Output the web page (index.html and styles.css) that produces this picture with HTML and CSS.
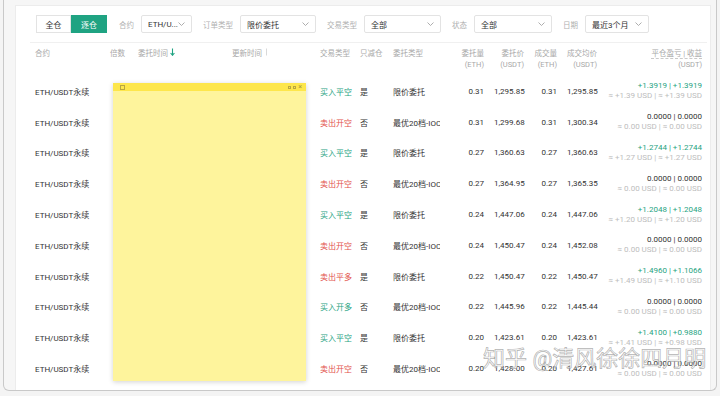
FILE: index.html
```html
<!DOCTYPE html>
<html lang="zh-CN">
<head>
    <meta charset="UTF-8">
    <meta name="viewport" content="width=device-width, initial-scale=1.0">
    <title>历史委托</title>
    <link rel="stylesheet" href="styles.css">
</head>
<body>
    <div class="frame">
        <div class="panel">
            <div class="filters">
                <div class="mode-group">
                    <button class="mode-btn">全仓</button>
                    <button class="mode-btn active">逐仓</button>
                </div>

                <span class="filter-label">合约</span>
                <div class="select w-contract">
                    <span>ETH/U...</span>
                    <svg class="chevron" width="7" height="4" viewBox="0 0 7 4"><polyline points="0.5,0.5 3.5,3.5 6.5,0.5"/></svg>
                </div>

                <span class="filter-label">订单类型</span>
                <div class="select w-type">
                    <span>限价委托</span>
                    <svg class="chevron" width="7" height="4" viewBox="0 0 7 4"><polyline points="0.5,0.5 3.5,3.5 6.5,0.5"/></svg>
                </div>

                <span class="filter-label">交易类型</span>
                <div class="select w-trade">
                    <span>全部</span>
                    <svg class="chevron" width="7" height="4" viewBox="0 0 7 4"><polyline points="0.5,0.5 3.5,3.5 6.5,0.5"/></svg>
                </div>

                <span class="filter-label">状态</span>
                <div class="select w-status">
                    <span>全部</span>
                    <svg class="chevron" width="7" height="4" viewBox="0 0 7 4"><polyline points="0.5,0.5 3.5,3.5 6.5,0.5"/></svg>
                </div>

                <span class="filter-label">日期</span>
                <div class="select w-date">
                    <span>最近3个月</span>
                    <svg class="chevron" width="7" height="4" viewBox="0 0 7 4"><polyline points="0.5,0.5 3.5,3.5 6.5,0.5"/></svg>
                </div>
            </div>

            <table class="orders">
                <colgroup>
                    <col style="width:75px">
                    <col style="width:28px">
                    <col style="width:94px">
                    <col style="width:88px">
                    <col style="width:40px">
                    <col style="width:33px">
                    <col style="width:52px">
                    <col style="width:49px">
                    <col style="width:40px">
                    <col style="width:33px">
                    <col style="width:40px">
                    <col style="width:105px">
                </colgroup>
                <thead>
                    <tr>
                        <th>合约</th>
                        <th>倍数</th>
                        <th>委托时间 <svg class="sort-down" width="5" height="8" viewBox="0 0 5 8"><path d="M2.5 0.5V7M0.6 5L2.5 7.3 4.4 5"/></svg></th>
                        <th>更新时间 <svg class="sort-both" width="5" height="8" viewBox="0 0 5 8"><path d="M2.5 0.5V7.5"/></svg></th>
                        <th>交易类型</th>
                        <th>只减仓</th>
                        <th>委托类型</th>
                        <th class="num">委托量<br>(ETH)</th>
                        <th class="num">委托价<br>(USDT)</th>
                        <th class="num">成交量<br>(ETH)</th>
                        <th class="num">成交均价<br>(USDT)</th>
                        <th class="num"><span class="dashed">平仓盈亏 | 收益</span><br>(USDT)</th>
                    </tr>
                </thead>
                <tbody id="rows"></tbody>
            </table>
        </div>
    </div>

    <div class="sticky-note">
        <div class="note-bar">
            <span class="note-square"></span>
            <span class="note-actions">
                <span class="note-dot"></span>
                <span class="note-dot"></span>
                <span class="note-close">×</span>
            </span>
        </div>
    </div>

    <div class="watermark">知乎 @清风徐徐四月明</div>

    <script>
        const orders = [
            ['buy', '买入平空', '是', '限价委托', '0.31', '1,295.85', '0.31', '1,295.85', '+1.3919', '+1.3919', '+1.39', '+1.39'],
            ['sell', '卖出开空', '否', '最优20档-IOC', '0.31', '1,299.68', '0.31', '1,300.34', '0.0000', '0.0000', '0.00', '0.00'],
            ['buy', '买入平空', '是', '限价委托', '0.27', '1,360.63', '0.27', '1,360.63', '+1.2744', '+1.2744', '+1.27', '+1.27'],
            ['sell', '卖出开空', '否', '最优20档-IOC', '0.27', '1,364.95', '0.27', '1,365.35', '0.0000', '0.0000', '0.00', '0.00'],
            ['buy', '买入平空', '是', '限价委托', '0.24', '1,447.06', '0.24', '1,447.06', '+1.2048', '+1.2048', '+1.20', '+1.20'],
            ['sell', '卖出开空', '否', '最优20档-IOC', '0.24', '1,450.47', '0.24', '1,452.08', '0.0000', '0.0000', '0.00', '0.00'],
            ['sell', '卖出平多', '是', '限价委托', '0.22', '1,450.47', '0.22', '1,450.47', '+1.4960', '+1.1066', '+1.49', '+1.10'],
            ['buy', '买入开多', '否', '最优20档-IOC', '0.22', '1,445.96', '0.22', '1,445.44', '0.0000', '0.0000', '0.00', '0.00'],
            ['buy', '买入平空', '是', '限价委托', '0.20', '1,423.61', '0.20', '1,423.61', '+1.4100', '+0.9880', '+1.41', '+0.98'],
            ['sell', '卖出开空', '否', '最优20档-IOC', '0.20', '1,428.00', '0.20', '1,427.61', '0.0000', '0.0000', '0.00', '0.00']
        ];

        const tbody = document.getElementById('rows');

        orders.forEach(o => {
            const tr = document.createElement('tr');
            const pnlClass = o[8].startsWith('+') ? 'pnl up' : 'pnl';
            tr.innerHTML = `
                <td>ETH/USDT永续</td>
                <td></td>
                <td></td>
                <td></td>
                <td class="${o[0]}">${o[1]}</td>
                <td>${o[2]}</td>
                <td>${o[3]}</td>
                <td class="num">${o[4]}</td>
                <td class="num">${o[5]}</td>
                <td class="num">${o[6]}</td>
                <td class="num">${o[7]}</td>
                <td class="num">
                    <div class="${pnlClass}">${o[8]} | ${o[9]}</div>
                    <div class="pnl-usd">≈ ${o[10]} USD | ≈ ${o[11]} USD</div>
                </td>`;
            tbody.appendChild(tr);
        });
    </script>
</body>
</html>
```

FILE: styles.css
```css
* {
    box-sizing: border-box;
    margin: 0;
    padding: 0;
    font-family: Roboto, 'Noto Sans CJK SC', sans-serif;
}

body {
    background-color: #f4f4f4;
    width: 720px;
    height: 396px;
    overflow: hidden;
}

.frame {
    margin: 0 3px 0 3px;
    height: 391px;
    background: #f6f6f6;
    border: 1px solid #c9c9c9;
    border-top: none;
    border-radius: 0 0 6px 6px;
    padding: 5px 5px 0 11px;
}

.panel {
    height: 100%;
    background: white;
    border-left: 1px solid #ececec;
    border-right: 1px solid #ececec;
    border-top: 1px solid #ececec;
    padding: 0 3px 0 14px;
}

/* filter bar */
.filters {
    display: flex;
    align-items: center;
    padding: 9px 0 9px 6px;
    border-bottom: 1px solid #f0f0f0;
}

.mode-group {
    display: flex;
    height: 18px;
    margin-right: 12px;
}

.mode-btn {
    width: 35px;
    height: 18px;
    border: 1px solid #e3e3e3;
    background: white;
    color: #333;
    font-size: 8px;
}

.mode-btn.active {
    width: 36px;
    background-color: #1fa382;
    border-color: #1fa382;
    color: white;
}

.filter-label {
    color: #b0b0b0;
    font-size: 7.5px;
    margin-right: 7px;
}

.select {
    height: 18px;
    display: flex;
    align-items: center;
    justify-content: space-between;
    padding: 0 6px 0 6px;
    border: 1px solid #e3e3e3;
    border-radius: 2px;
    font-size: 8px;
    color: #333;
    margin-right: 11px;
}

.chevron polyline {
    fill: none;
    stroke: #999;
    stroke-width: 0.8;
}

.w-contract { width: 51px; }
.w-type { width: 76px; }
.w-trade { width: 77px; }
.w-status { width: 78px; }
.w-date { width: 64px; margin-right: 0; }

/* table */
.orders {
    width: 677px;
    table-layout: fixed;
    border-collapse: collapse;
    border-spacing: 0;
}

.orders thead tr {
    height: 33px;
}

.orders th {
    vertical-align: top;
    padding: 5px 5px 0;
    text-align: left;
    font-weight: normal;
    font-size: 7.5px;
    line-height: 11px;
    color: #a8a8a8;
    white-space: nowrap;
}

.orders th.num,
.orders td.num {
    text-align: right;
}

.sort-down path {
    fill: none;
    stroke: #1fa382;
    stroke-width: 1.1;
}

.sort-both path {
    fill: none;
    stroke: #c8c8c8;
    stroke-width: 0.7;
}

.dashed {
    border-bottom: 1px dashed #c9c9c9;
}

.orders tbody tr {
    height: 30.8px;
}

.orders td {
    padding: 0 5px;
    font-size: 8px;
    color: #333;
    white-space: nowrap;
    overflow: hidden;
}

.orders td.buy {
    color: #1fa382;
}

.orders td.sell {
    color: #e2514a;
}

.pnl {
    line-height: 10px;
    color: #333;
}

.pnl.up {
    color: #1fa382;
}

.pnl-usd {
    line-height: 10px;
    color: #bdbdbd;
}

/* sticky note over the table */
.sticky-note {
    position: absolute;
    left: 113px;
    top: 83px;
    width: 193px;
    height: 298px;
    background: #fef49c;
    box-shadow: 0 1px 5px rgba(0,0,0,0.18);
}

.note-bar {
    height: 8px;
    background: #fde64b;
    display: flex;
    align-items: center;
    justify-content: space-between;
    padding: 0 4px 0 7px;
}

.note-square {
    width: 5px;
    height: 5px;
    border: 1px solid #b9a640;
}

.note-actions {
    display: flex;
    align-items: center;
    gap: 2px;
}

.note-dot {
    width: 3px;
    height: 3px;
    border: 1px solid #b9a640;
}

.note-close {
    font-size: 7px;
    line-height: 7px;
    color: #a8973a;
}

.watermark {
    position: absolute;
    left: 483px;
    top: 344px;
    font-size: 22px;
    line-height: 30px;
    color: rgba(255,255,255,0.75);
    -webkit-text-stroke: 0.7px rgba(110,110,110,0.55);
    white-space: nowrap;
}
```
